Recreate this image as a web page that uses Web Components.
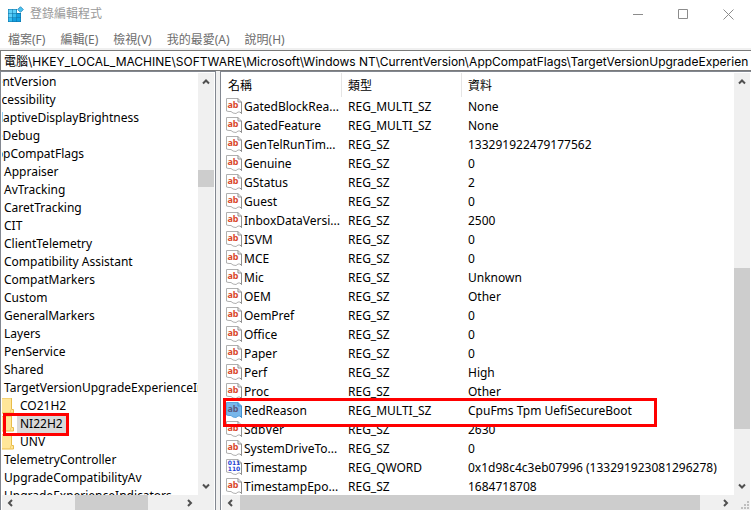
<!DOCTYPE html>
<html lang="zh-Hant">
<head>
<meta charset="utf-8">
<title>登錄編輯程式</title>
<style>
    html, body {
        height: 100%;
        margin: 0;
        overflow: hidden;
    }

    body {
        font: 12px/18px "Noto Sans", "Noto Sans CJK TC", sans-serif;
        color: #000;
        background: #fff;
    }
</style>
</head>
<body>
<registry-editor></registry-editor>

<template id="title-bar">
<style>
    :host {
        display: flex;
        align-items: center;
        height: 28px;
        padding-left: 7px;
        color: #999;
    }

    .logo {
        flex: none;
        width: 18px;
        height: 18px;
        margin-right: 5px;
    }

    h1 {
        flex: 1;
        margin: 0;
        font: inherit;
    }

    button {
        display: flex;
        align-items: center;
        justify-content: center;
        width: 45px;
        height: 28px;
        padding: 0;
        border: 0;
        background: none;
    }

    button svg {
        width: 11px;
        height: 11px;
        fill: none;
        stroke: #8c8c8c;
    }
</style>
<svg class="logo" viewBox="0 0 18 18">
    <path d="M1 4h9v4h4v9H1z" fill="#0b6fa4"/>
    <path d="M1.500 4.500h3.700v3.700H1.500zM5.700 4.500h3.700v3.700H5.700zM1.500 8.700h3.700v3.700H1.500z" fill="#5fd0f8"/>
    <path d="M5.700 8.700h3.700v3.700H5.700zM1.500 12.900h3.700v3.600H1.500z" fill="#38bdf0"/>
    <path d="M9.900 8.700h3.600v3.700H9.900zM5.700 12.900h3.700v3.600H5.700zM9.900 12.900h3.600v3.600H9.900z" fill="#14a0e0"/>
    <path d="M13.500 1.700L16.300 4.500 13.500 7.300 10.700 4.500z" fill="#4cc3f2" stroke="#1a82b5" stroke-width=".8"/>
</svg>
<h1><slot></slot></h1>
<button aria-label="最小化"><svg viewBox="0 0 11 11"><path d="M0 5.500h10"/></svg></button>
<button aria-label="最大化"><svg viewBox="0 0 11 11"><path d="M.5.5h9v9h-9z"/></svg></button>
<button aria-label="關閉"><svg viewBox="0 0 11 11"><path d="M.5.5l10 10M10.500.5l-10 10"/></svg></button>
</template>

<template id="menu-bar">
<style>
    :host {
        display: flex;
        align-items: center;
        gap: 15px;
        height: 20px;
        padding: 3px 8px 0;
        box-sizing: border-box;
    }

    ::slotted(button) {
        padding: 0;
        border: 0;
        background: none;
        font: inherit;
        color: #6d6d6d;
    }
</style>
<slot></slot>
</template>

<template id="address-bar">
<style>
    :host {
        display: block;
        padding-top: 2px;
        background: #f0f0f0;
    }

    input {
        display: block;
        box-sizing: border-box;
        width: 100%;
        height: 21px;
        padding: 0 0 0 3px;
        border: 1px solid #7a7a7a;
        border-right: 0;
        outline: 0;
        background: #fff;
        font: 12px/18px Inter, "Noto Sans CJK TC", sans-serif;
        color: #000;
    }
</style>
<input type="text" aria-label="位址">
</template>

<template id="scroll-bar">
<style>
    :host {
        display: flex;
        background: #f0f0f0;
    }

    :host([vertical]) {
        flex-direction: column;
    }

    button {
        display: flex;
        align-items: center;
        justify-content: center;
        flex: 0 0 18px;
        padding: 0;
        border: 0;
        background: none;
    }

    svg {
        width: 10px;
        height: 10px;
        fill: none;
        stroke: #505050;
        stroke-width: 2;
    }

    .end svg {
        transform: rotate(180deg);
    }

    .thumb {
        background: #cdcdcd;
    }
</style>
<button class="start" tabindex="-1"><svg viewBox="0 0 10 10"><path/></svg></button>
<div class="before"></div>
<div class="thumb"></div>
<div class="after"></div>
<button class="end" tabindex="-1"><svg viewBox="0 0 10 10"><path/></svg></button>
</template>

<template id="scroll-pane">
<style>
    :host {
        display: grid;
        grid-template: minmax(0, 1fr) 15px / minmax(0, 1fr) 16px;
        box-sizing: border-box;
        padding: 1px 1px 0;
        border: 1px solid #828790;
        border-width: 1px 0 0 1px;
        background: #fff;
    }

    .view {
        overflow: hidden;
    }

    .corner {
        display: flex;
        align-items: flex-end;
        justify-content: flex-end;
        background: #f0f0f0;
    }

    .corner svg {
        display: none;
        width: 9px;
        height: 9px;
        margin: 0 1px 1px 0;
        fill: #bfbfbf;
    }

    :host([grip]) .corner svg {
        display: block;
    }
</style>
<div class="view"><slot></slot></div>
<slot name="vertical"></slot>
<slot name="horizontal"></slot>
<div class="corner">
    <svg viewBox="0 0 9 9"><path d="M7 1h2v2H7zM4 4h2v2H4zM7 4h2v2H7zM1 7h2v2H1zM4 7h2v2H4zM7 7h2v2H7z"/></svg>
</div>
</template>

<template id="key-tree">
<style>
    :host {
        display: block;
    }

    ul {
        margin: 0;
        padding: 0;
        list-style: none;
    }

    li {
        display: flex;
        position: relative;
        height: 18px;
        white-space: nowrap;
    }

    /* the tree is scrolled sideways, so outer levels start left of the view */
    .level1 { margin-left: -31px; }
    .level2 { margin-left: -14px; }
    .level3 { margin-left: 2px; }

    .level4 svg {
        flex: none;
        width: 12px;
        height: 18px;
        margin-right: 3px;
    }

    .level4 span {
        padding: 0 3px;
    }

    .selected span {
        background: #d9d9d9;
    }

    .selected::after {
        content: "";
        position: absolute;
        z-index: 1;
        top: -2px;
        left: 1px;
        box-sizing: border-box;
        width: 66px;
        height: 23px;
        border: 3px solid #f00;
    }
</style>
<ul role="tree"></ul>
</template>

<template id="value-icon">
<style>
    :host {
        display: block;
        flex: none;
        width: 16px;
        height: 16px;
    }

    svg {
        display: block;
    }

    .page {
        fill: #fff;
        stroke: #b0b0b0;
    }

    .edge {
        fill: none;
        stroke: #8f8f8f;
    }

    text {
        font: bold 9px/9px "Noto Sans", sans-serif;
        text-anchor: middle;
        fill: #d9472b;
    }

    :host([type="binary"]) text {
        font: bold 6px/6px "DejaVu Sans", sans-serif;
        fill: #2443d6;
    }

    :host([selected]) .page {
        fill: #78b7ea;
        stroke: #5ba4de;
    }

    :host([selected]) .edge {
        stroke: #3f8fd0;
    }

    :host([selected]) text {
        fill: #5b5a80;
    }
</style>
<svg width="16" height="16" viewBox="0 0 16 16">
    <path class="page" d="M.5.5h11.500l3.500 3.500v11.500l-1.500-1.500h-2l-2 1.500-3-.5-2-1.500h-2l-2.500-.5z"/>
    <path class="edge" d="M12 .5v3.500h3.500v11.500l-1.500-1.500"/>
    <g></g>
</svg>
</template>

<template id="value-list">
<style>
    :host {
        display: block;
    }

    table {
        width: 100%;
        table-layout: fixed;
        border-collapse: separate;
        border-spacing: 0;
    }

    th, td {
        height: 19px;
        padding: 0 0 0 7px;
        font-weight: normal;
        line-height: 19px;
        text-align: left;
        white-space: nowrap;
    }

    th {
        height: 24px;
    }

    th + th {
        border-left: 1px solid #e5e5e5;
        padding-left: 6px;
    }

    th:first-child { width: 113px; padding-left: 6px; }
    th:nth-child(2) { width: 113px; }

    td:first-child {
        padding-left: 4px;
    }

    .name {
        display: flex;
        align-items: flex-end;
        gap: 2px;
        height: 19px;
    }

    value-icon {
        margin-bottom: 2px;
    }

    .marked {
        position: relative;
    }

    .mark {
        position: absolute;
        z-index: 1;
        top: -3px;
        left: 1px;
        box-sizing: border-box;
        width: 434px;
        height: 29px;
        border: 3px solid #f00;
    }
</style>
<table>
    <thead><tr><th>名稱</th><th>類型</th><th>資料</th></tr></thead>
    <tbody></tbody>
</table>
</template>

<template id="registry-editor">
<style>
    :host {
        display: flex;
        flex-direction: column;
        height: 100vh;
        background: #fff;
    }

    main {
        display: flex;
        flex: 1;
        min-height: 0;
        background: #f0f0f0;
    }

    .keys {
        flex: 0 0 216px;
        border-right: 1px solid #828790;
    }

    .values {
        flex: 1;
        min-width: 0;
        margin-left: 4px;
    }
</style>
<title-bar>登錄編輯程式</title-bar>
<menu-bar>
    <button>檔案(F)</button>
    <button>編輯(E)</button>
    <button>檢視(V)</button>
    <button>我的最愛(A)</button>
    <button>說明(H)</button>
</menu-bar>
<address-bar value="電腦\HKEY_LOCAL_MACHINE\SOFTWARE\Microsoft\Windows NT\CurrentVersion\AppCompatFlags\TargetVersionUpgradeExperien"></address-bar>
<main>
    <scroll-pane class="keys">
        <key-tree></key-tree>
        <scroll-bar slot="vertical" vertical parts="79 17 290"></scroll-bar>
        <scroll-bar slot="horizontal" parts="55 73 32"></scroll-bar>
    </scroll-pane>
    <scroll-pane class="values" grip>
        <value-list></value-list>
        <scroll-bar slot="vertical" vertical parts="177 161 48"></scroll-bar>
        <scroll-bar slot="horizontal" parts="0 462 16"></scroll-bar>
    </scroll-pane>
</main>
</template>

<script>
const keys = [
    [1, "CurrentVersion"],
    [2, "Accessibility"],
    [2, "AdaptiveDisplayBrightness"],
    [2, "AeDebug"],
    [2, "AppCompatFlags"],
    [3, "Appraiser"],
    [3, "AvTracking"],
    [3, "CaretTracking"],
    [3, "CIT"],
    [3, "ClientTelemetry"],
    [3, "Compatibility Assistant"],
    [3, "CompatMarkers"],
    [3, "Custom"],
    [3, "GeneralMarkers"],
    [3, "Layers"],
    [3, "PenService"],
    [3, "Shared"],
    [3, "TargetVersionUpgradeExperienceIndicators"],
    [4, "CO21H2"],
    [4, "NI22H2"],
    [4, "UNV"],
    [3, "TelemetryController"],
    [3, "UpgradeCompatibilityAv"],
    [3, "UpgradeExperienceIndicators"],
];

const values = [
    ["GatedBlockRea...", "REG_MULTI_SZ", "None"],
    ["GatedFeature", "REG_MULTI_SZ", "None"],
    ["GenTelRunTim...", "REG_SZ", "133291922479177562"],
    ["Genuine", "REG_SZ", "0"],
    ["GStatus", "REG_SZ", "2"],
    ["Guest", "REG_SZ", "0"],
    ["InboxDataVersi...", "REG_SZ", "2500"],
    ["ISVM", "REG_SZ", "0"],
    ["MCE", "REG_SZ", "0"],
    ["Mic", "REG_SZ", "Unknown"],
    ["OEM", "REG_SZ", "Other"],
    ["OemPref", "REG_SZ", "0"],
    ["Office", "REG_SZ", "0"],
    ["Paper", "REG_SZ", "0"],
    ["Perf", "REG_SZ", "High"],
    ["Proc", "REG_SZ", "Other"],
    ["RedReason", "REG_MULTI_SZ", "CpuFms Tpm UefiSecureBoot"],
    ["SdbVer", "REG_SZ", "2630"],
    ["SystemDriveTo...", "REG_SZ", "0"],
    ["Timestamp", "REG_QWORD", "0x1d98c4c3eb07996 (133291923081296278)"],
    ["TimestampEpo...", "REG_SZ", "1684718708"],
];

const selectedKey = "NI22H2";
const selectedValue = "RedReason";

const folder = `
<svg viewBox="0 0 12 18">
    <path d="M0 1h9v12h2v3H0z" fill="#ffe699"/>
    <path d="M9.500 1v11.500h2V16H0" fill="none" stroke="#e9bd49"/>
    <path d="M0 1.500h9" stroke="#f5d273"/>
    <path d="M9 12.500l-1 3.500" stroke="#f3cd68" fill="none"/>
</svg>`;

class TemplateElement extends HTMLElement {
    constructor() {
        super();
        const shadow = this.attachShadow({ mode: "open" });
        const template = document.getElementById(this.localName);
        shadow.append(template.content.cloneNode(true));
    }
}

class TitleBar extends TemplateElement {}
class MenuBar extends TemplateElement {}
class ScrollPane extends TemplateElement {}
class RegistryEditor extends TemplateElement {}

class AddressBar extends TemplateElement {
    connectedCallback() {
        this.shadowRoot.querySelector("input").value = this.getAttribute("value");
    }
}

class ScrollBar extends TemplateElement {
    connectedCallback() {
        const shadow = this.shadowRoot;
        const vertical = this.hasAttribute("vertical");
        const parts = this.getAttribute("parts").split(" ");
        [".before", ".thumb", ".after"].forEach((selector, i) => {
            shadow.querySelector(selector).style.flex = `${parts[i]} 0 0px`;
        });

        const arrow = vertical ? "M2 6.500l3-3 3 3" : "M6 2L3 5l3 3";
        shadow.querySelectorAll("path").forEach(path => path.setAttribute("d", arrow));
        shadow.querySelector(".start").setAttribute("aria-label", vertical ? "向上" : "向左");
        shadow.querySelector(".end").setAttribute("aria-label", vertical ? "向下" : "向右");
    }
}

class KeyTree extends TemplateElement {
    connectedCallback() {
        const list = this.shadowRoot.querySelector("ul");
        list.innerHTML = keys.map(([level, name]) => `
            <li role="treeitem" aria-level="${level}" class="level${level}${name === selectedKey ? " selected" : ""}">
                ${level === 4 ? folder : ""}<span>${name}</span>
            </li>`).join("");
    }
}

class ValueIcon extends TemplateElement {
    connectedCallback() {
        const binary = this.getAttribute("type") === "binary";
        this.shadowRoot.querySelector("g").innerHTML = binary
            ? `<text x="8" y="6">011</text><text x="8" y="12">110</text>`
            : `<text x="7" y="10">ab</text>`;
    }
}

class ValueList extends TemplateElement {
    connectedCallback() {
        const body = this.shadowRoot.querySelector("tbody");
        body.innerHTML = values.map(([name, type, data]) => {
            const selected = name === selectedValue;
            const icon = type === "REG_QWORD" ? "binary" : "string";
            return `
            <tr${selected ? ` class="marked"` : ""}>
                <td><div class="name"><value-icon type="${icon}"${selected ? " selected" : ""}></value-icon>${name}</div>${selected ? `<div class="mark"></div>` : ""}</td>
                <td>${type}</td>
                <td>${data}</td>
            </tr>`;
        }).join("");
    }
}

customElements.define("title-bar", TitleBar);
customElements.define("menu-bar", MenuBar);
customElements.define("address-bar", AddressBar);
customElements.define("scroll-bar", ScrollBar);
customElements.define("scroll-pane", ScrollPane);
customElements.define("key-tree", KeyTree);
customElements.define("value-icon", ValueIcon);
customElements.define("value-list", ValueList);
customElements.define("registry-editor", RegistryEditor);
</script>
</body>
</html>
